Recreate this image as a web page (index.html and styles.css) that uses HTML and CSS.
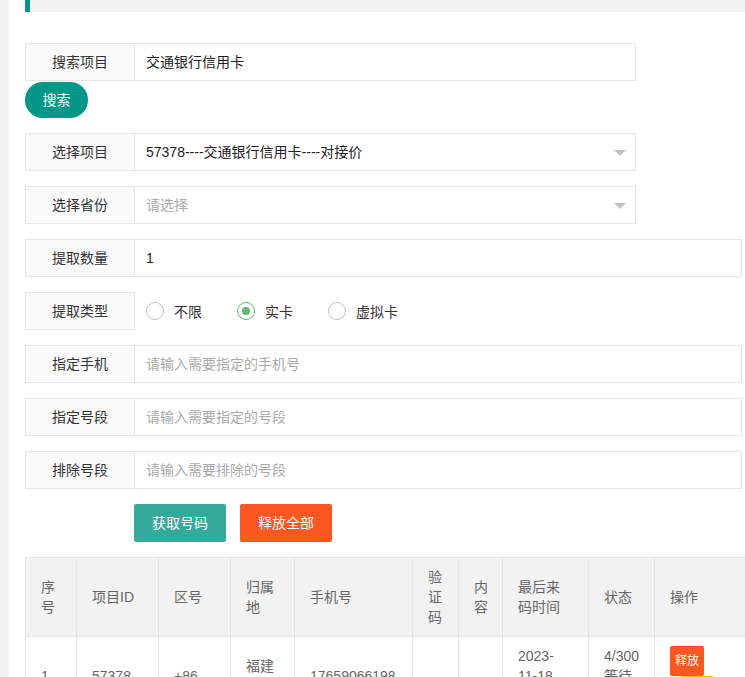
FILE: index.html
```html
<!DOCTYPE html>
<html lang="zh-CN">
<head>
<meta charset="utf-8">
<title>取号</title>
<link rel="stylesheet" href="styles.css">
</head>
<body>
<div class="layout">
  <div class="side-strip"></div>
  <main class="main">
    <div class="quote"></div>

    <div class="form-item narrow first">
      <div class="label">搜索项目</div>
      <div class="input-block value">交通银行信用卡</div>
    </div>
    <button class="btn btn-round">搜索</button>

    <div class="form-item narrow">
      <div class="label">选择项目</div>
      <div class="input-block value select">57378----交通银行信用卡----对接价<span class="arrow"></span></div>
    </div>

    <div class="form-item narrow">
      <div class="label">选择省份</div>
      <div class="input-block placeholder select">请选择<span class="arrow"></span></div>
    </div>

    <div class="form-item wide">
      <div class="label">提取数量</div>
      <div class="input-block value">1</div>
    </div>

    <div class="form-item wide">
      <div class="label">提取类型</div>
      <div class="radios">
        <span class="radio"><i class="circle"></i>不限</span>
        <span class="radio"><i class="circle checked"></i>实卡</span>
        <span class="radio"><i class="circle"></i>虚拟卡</span>
      </div>
    </div>

    <div class="form-item wide">
      <div class="label">指定手机</div>
      <div class="input-block placeholder">请输入需要指定的手机号</div>
    </div>

    <div class="form-item wide">
      <div class="label">指定号段</div>
      <div class="input-block placeholder">请输入需要指定的号段</div>
    </div>

    <div class="form-item wide">
      <div class="label">排除号段</div>
      <div class="input-block placeholder">请输入需要排除的号段</div>
    </div>

    <div class="actions">
      <button class="btn btn-teal">获取号码</button>
      <button class="btn btn-orange">释放全部</button>
    </div>

    <table class="table">
      <colgroup>
        <col class="c1"><col class="c2"><col class="c3"><col class="c4"><col class="c5">
        <col class="c6"><col class="c7"><col class="c8"><col class="c9"><col class="c10">
      </colgroup>
      <thead>
        <tr>
          <th>序号</th><th>项目ID</th><th>区号</th><th>归属地</th><th>手机号</th>
          <th>验证码</th><th>内容</th><th>最后来码时间</th><th>状态</th><th>操作</th>
        </tr>
      </thead>
      <tbody>
        <tr>
          <td>1</td><td>57378</td><td>+86</td><td>福建福州</td><td>17659066198</td>
          <td></td><td></td>
          <td><span class="nw">2023-</span> <span class="nw">11-18</span> <span class="nw">12:30:45</span></td>
          <td>4/300 等待中</td>
          <td><span class="xs xs-orange">释放</span><span class="xs xs-yellow">拉黑</span></td>
        </tr>
      </tbody>
    </table>
  </main>
</div>
</body>
</html>
```

FILE: styles.css
```css
* { box-sizing: border-box; }

html, body {
  margin: 0;
  padding: 0;
  background: #fff;
  font-family: "Liberation Sans", "Noto Sans CJK SC", sans-serif;
  font-size: 14px;
  color: #333;
}

.layout {
  display: flex;
  width: 745px;
  height: 677px;
  overflow: hidden;
}

.side-strip {
  width: 9px;
  flex: none;
  background: #f2f2f2;
}

.main {
  flex: 1;
  padding-left: 16px;
  overflow: hidden;
  min-width: 0;
}

.quote {
  height: 12px;
  background: #f2f2f2;
  border-left: 5px solid #009688;
  margin-bottom: 31px;
}

.form-item {
  display: flex;
  height: 38px;
  margin-bottom: 15px;
}
.form-item.first { margin-bottom: 1px; }
.form-item.narrow { width: 611px; }
.form-item.wide { width: 717px; }

.label {
  width: 110px;
  flex: none;
  border: 1px solid #e6e6e6;
  background: #fafafa;
  text-align: center;
  line-height: 36px;
  color: #333;
}

.input-block {
  flex: 1;
  position: relative;
  border: 1px solid #e6e6e6;
  border-left: none;
  padding-left: 11px;
  line-height: 36px;
}
.value { color: #222; }
.placeholder { color: #aaa; }

.arrow {
  position: absolute;
  right: 9px;
  top: 16px;
  width: 0;
  height: 0;
  border-left: 6px solid transparent;
  border-right: 6px solid transparent;
  border-top: 6px solid #c2c2c2;
}

.radios {
  flex: 1;
  display: flex;
  align-items: center;
  padding-left: 11px;
}
.radio {
  display: flex;
  align-items: center;
  margin-right: 35px;
  color: #333;
}
.circle {
  width: 18px;
  height: 18px;
  border: 1px solid #c2c2c2;
  border-radius: 50%;
  margin-right: 10px;
  display: flex;
  align-items: center;
  justify-content: center;
}
.circle.checked { border-color: #5fb878; }
.circle.checked::after {
  content: "";
  width: 8px;
  height: 8px;
  border-radius: 50%;
  background: #5fb878;
}

.btn {
  display: inline-block;
  border: none;
  color: #fff;
  font-family: inherit;
  font-size: 14px;
  height: 38px;
  line-height: 38px;
  padding: 0 18px;
  border-radius: 2px;
  cursor: pointer;
}
.btn-round {
  display: block;
  height: 36px;
  line-height: 36px;
  width: 63px;
  padding: 0;
  border-radius: 18px;
  background: #009688;
  margin-bottom: 15px;
}
.btn-teal { background: #34aa9c; }
.btn-orange { background: #ff5722; margin-left: 14px; }

.actions {
  padding-left: 109px;
  display: flex;
  margin-bottom: 15px;
}

.table {
  border-collapse: collapse;
  table-layout: fixed;
  width: 780px;
  color: #666;
}
.c1 { width: 51px; }
.c2 { width: 82px; }
.c3 { width: 72px; }
.c4 { width: 64px; }
.c5 { width: 118px; }
.c6 { width: 46px; }
.c7 { width: 44px; }
.c8 { width: 86px; }
.c9 { width: 66px; }
.c10 { width: 151px; }

.table th, .table td {
  border: 1px solid #e6e6e6;
  padding: 9px 15px;
  line-height: 20px;
  font-weight: normal;
  text-align: left;
  vertical-align: middle;
}
.table th { background: #f2f2f2; }
.table td:last-child { padding-right: 70px; }

.nw { white-space: nowrap; }

.xs {
  display: inline-block;
  height: 30px;
  line-height: 30px;
  padding: 0 5px;
  font-size: 12px;
  color: #fff;
  border-radius: 2px;
  vertical-align: top;
}
.xs-orange { background: #ff5722; }
.xs-yellow { background: #ffb800; margin-left: 10px; }
```
